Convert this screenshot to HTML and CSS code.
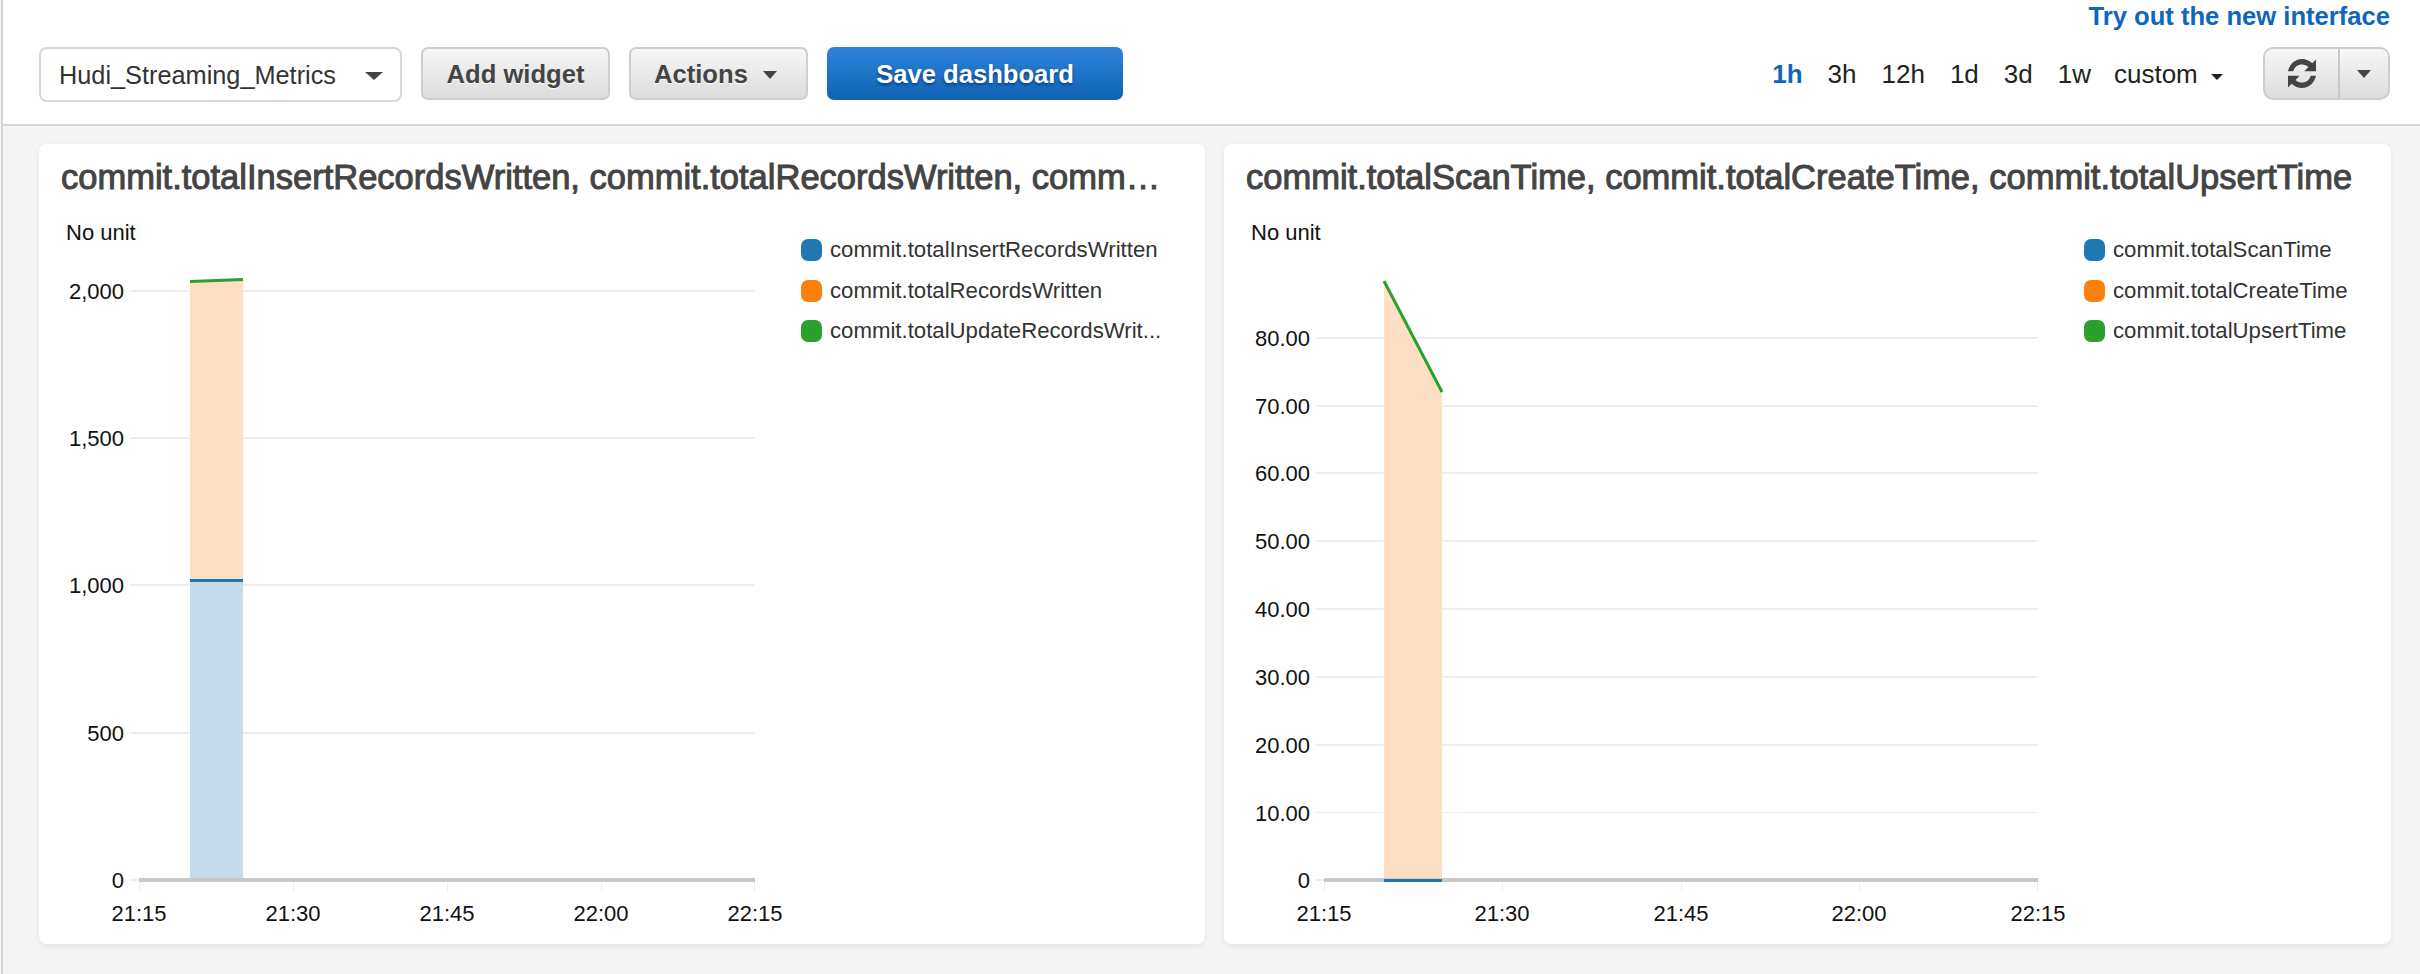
FILE: index.html
```html
<!DOCTYPE html>
<html lang="en">
<head>
	<meta charset="UTF-8">
	<title>Hudi_Streaming_Metrics - CloudWatch</title>
	<link rel="stylesheet" href="styles.css">
</head>
<body>
	<div class="page">
		<header class="topbar">
			<div class="tryRow"><a class="tryLink" href="#">Try out the new interface</a></div>
			<div class="toolRow">
				<div class="dashSelect">
					<span>Hudi_Streaming_Metrics</span>
					<i class="caret caretSelect"></i>
				</div>
				<button class="btn btnAdd">Add widget</button>
				<button class="btn btnActions">Actions <i class="caret caretBtn"></i></button>
				<button class="btn btnPrimary">Save dashboard</button>
				<div class="timeRange">
					<a class="range active">1h</a>
					<a class="range">3h</a>
					<a class="range">12h</a>
					<a class="range">1d</a>
					<a class="range">3d</a>
					<a class="range">1w</a>
					<a class="range custom">custom <i class="caret caretSmall"></i></a>
				</div>
				<div class="refreshGroup">
					<button class="refreshBtn" aria-label="Refresh">
						<svg width="36" height="35" viewBox="0 0 30 30">
							<path d="M3 13C4.500 6.500 9.300 2.500 15 2.500c3.500 0 6.500 1.400 8.800 3.700L27 3V13H17L20.500 9.500C19 8 17.100 7.200 15 7.200c-3.600 0-6.500 2.300-7.500 5.800Z" fill="#444"/>
							<path d="M27 17C25.500 23.500 20.700 27.500 15 27.500c-3.500 0-6.500-1.400-8.800-3.700L3 27V17H13L9.500 20.500C11 22 12.900 22.800 15 22.800c3.600 0 6.500-2.300 7.500-5.800Z" fill="#444"/>
						</svg>
					</button>
					<button class="refreshMenu" aria-label="Refresh options"><i class="caret caretBtn"></i></button>
				</div>
			</div>
		</header>

		<main class="widgets">
			<section class="widget widgetLeft">
				<h2 class="widgetTitle">commit.totalInsertRecordsWritten, commit.totalRecordsWritten, comm…</h2>
				<div class="chartArea">
					<svg class="chart" width="1166" height="800" viewBox="39 144 1166 800">
						<text class="tick" x="66" y="240">No unit</text>
						<g class="grid">
							<rect x="130" y="290" width="625" height="2"/>
							<rect x="130" y="437" width="625" height="2"/>
							<rect x="130" y="584" width="625" height="2"/>
							<rect x="130" y="732" width="625" height="2"/>
							<rect x="130" y="879" width="10" height="2"/>
						</g>
						<g class="tick" text-anchor="end">
							<text x="124" y="299">2,000</text>
							<text x="124" y="446">1,500</text>
							<text x="124" y="593">1,000</text>
							<text x="124" y="741">500</text>
							<text x="124" y="888">0</text>
						</g>
						<polygon points="190,282 243,280 243,580 190,580" fill="#ffdfc3"/>
						<rect x="190" y="580" width="53" height="298" fill="#c7dcea"/>
						<rect x="190" y="579" width="53" height="3" fill="#1f77b4"/>
						<line x1="190" y1="281.500" x2="243" y2="279.500" stroke="#2ca02c" stroke-width="3"/>
						<rect x="139" y="878" width="616" height="4" fill="#c8c8c8"/>
						<g class="grid">
							<rect x="139" y="882" width="1" height="9"/>
							<rect x="293" y="882" width="1" height="9"/>
							<rect x="447" y="882" width="1" height="9"/>
							<rect x="601" y="882" width="1" height="9"/>
							<rect x="754" y="882" width="1" height="9"/>
						</g>
						<g class="tick" text-anchor="middle">
							<text x="139" y="921">21:15</text>
							<text x="293" y="921">21:30</text>
							<text x="447" y="921">21:45</text>
							<text x="601" y="921">22:00</text>
							<text x="755" y="921">22:15</text>
						</g>
					</svg>
					<ul class="legend legendLeft">
						<li><i class="swatch blue"></i>commit.totalInsertRecordsWritten</li>
						<li><i class="swatch orange"></i>commit.totalRecordsWritten</li>
						<li><i class="swatch green"></i>commit.totalUpdateRecordsWrit...</li>
					</ul>
				</div>
			</section>

			<section class="widget widgetRight">
				<h2 class="widgetTitle">commit.totalScanTime, commit.totalCreateTime, commit.totalUpsertTime</h2>
				<div class="chartArea">
					<svg class="chart" width="1167" height="800" viewBox="1224 144 1167 800">
						<text class="tick" x="1251" y="240">No unit</text>
						<g class="grid">
							<rect x="1316" y="337" width="722" height="2"/>
							<rect x="1316" y="405" width="722" height="2"/>
							<rect x="1316" y="472" width="722" height="2"/>
							<rect x="1316" y="540" width="722" height="2"/>
							<rect x="1316" y="608" width="722" height="2"/>
							<rect x="1316" y="676" width="722" height="2"/>
							<rect x="1316" y="744" width="722" height="2"/>
							<rect x="1316" y="812" width="722" height="1"/>
							<rect x="1316" y="879" width="10" height="2"/>
						</g>
						<g class="tick" text-anchor="end">
							<text x="1310" y="346">80.00</text>
							<text x="1310" y="414">70.00</text>
							<text x="1310" y="481">60.00</text>
							<text x="1310" y="549">50.00</text>
							<text x="1310" y="617">40.00</text>
							<text x="1310" y="685">30.00</text>
							<text x="1310" y="753">20.00</text>
							<text x="1310" y="821">10.00</text>
							<text x="1310" y="888">0</text>
						</g>
						<polygon points="1384,281 1442,392 1442,878 1384,878" fill="#ffdfc3"/>
						<line x1="1384" y1="281" x2="1442" y2="392" stroke="#2ca02c" stroke-width="3"/>
						<rect x="1324" y="878" width="714" height="4" fill="#c8c8c8"/>
						<rect x="1384" y="879" width="58" height="3" fill="#1f77b4"/>
						<g class="grid">
							<rect x="1324" y="882" width="1" height="9"/>
							<rect x="1502" y="882" width="1" height="9"/>
							<rect x="1681" y="882" width="1" height="9"/>
							<rect x="1859" y="882" width="1" height="9"/>
							<rect x="2037" y="882" width="1" height="9"/>
						</g>
						<g class="tick" text-anchor="middle">
							<text x="1324" y="921">21:15</text>
							<text x="1502" y="921">21:30</text>
							<text x="1681" y="921">21:45</text>
							<text x="1859" y="921">22:00</text>
							<text x="2038" y="921">22:15</text>
						</g>
					</svg>
					<ul class="legend legendRight">
						<li><i class="swatch blue"></i>commit.totalScanTime</li>
						<li><i class="swatch orange"></i>commit.totalCreateTime</li>
						<li><i class="swatch green"></i>commit.totalUpsertTime</li>
					</ul>
				</div>
			</section>
		</main>
	</div>
</body>
</html>
```

FILE: styles.css
```css
html, body {
	margin: 0;
	height: 100%;
	overflow: hidden;
}
body {
	background-color: #f5f5f5;
	font-family: "Liberation Sans", Arial, sans-serif;
	color: #000;
}
.page {
	height: 974px;
	border-left: 2px solid #d5d5d5;
	margin-left: 1px;
	box-sizing: border-box;
}
.topbar {
	background-color: #fff;
	height: 126px;
	box-sizing: border-box;
	border-bottom: 2px solid #d5d5d5;
	padding-right: 30px;
}
.tryRow {
	height: 47px;
	text-align: right;
	line-height: 32px;
}
.tryLink {
	color: #1166bb;
	font-size: 25.600px;
	font-weight: bold;
	text-decoration: none;
}
.toolRow {
	display: flex;
	align-items: flex-start;
	padding-left: 36px;
}
.dashSelect {
	width: 363px;
	height: 55px;
	box-sizing: border-box;
	border: 2px solid #d8d8d8;
	border-radius: 8px;
	display: flex;
	align-items: center;
	justify-content: space-between;
	padding: 2px 17px 0 18px;
	font-size: 25.300px;
	color: #333;
}
.btn {
	height: 53px;
	margin-left: 19px;
	box-sizing: border-box;
	border: 2px solid #cecece;
	border-radius: 7px;
	background: linear-gradient(#f7f7f7, #dcdcdc);
	font-family: inherit;
	font-size: 25.600px;
	font-weight: bold;
	color: #444;
	text-shadow: 0 1px 1px #fff;
	padding: 1px 0 0;
}
.btnAdd {
	width: 189px;
}
.btnActions {
	width: 179px;
	padding-right: 6px;
}
.btnPrimary {
	width: 296px;
	border: 0;
	background: linear-gradient(#2f83d9, #0f63b5);
	color: #fff;
	text-shadow: 0 2px 3px #0a3f78;
}
.caret {
	display: inline-block;
	width: 0;
	height: 0;
	border-style: solid;
	border-color: #444 transparent transparent;
}
.caretSelect {
	border-width: 8px 9px 0;
}
.caretBtn {
	border-width: 8px 7.500px 0;
	vertical-align: 4px;
	margin-left: 8px;
}
.caretSmall {
	border-width: 6px 6px 0;
	border-top-color: #222;
	vertical-align: 3px;
	margin-left: 6px;
}
.timeRange {
	margin-left: auto;
	display: flex;
	gap: 25px;
	height: 53px;
	line-height: 54px;
	font-size: 26px;
}
.range {
	color: #222;
}
.range.active {
	color: #1166bb;
	font-weight: bold;
}
.custom {
	margin-left: -2px;
}
.refreshGroup {
	display: flex;
	margin-left: 40px;
	height: 53px;
	box-sizing: border-box;
	border: 2px solid #cecece;
	border-radius: 10px;
	background: linear-gradient(#f7f7f7, #dcdcdc);
}
.refreshGroup button {
	border: 0;
	background: none;
	padding: 0;
	display: flex;
	align-items: center;
	justify-content: center;
}
.refreshBtn {
	width: 75px;
	border-right: 2px solid #c8c8c8 !important;
}
.refreshMenu {
	width: 48px;
}
.refreshMenu .caret {
	margin: 0;
	vertical-align: 0;
}
.widgets {
	display: flex;
	gap: 19px;
	padding: 18px 0 0 36px;
}
.widget {
	background-color: #fff;
	height: 800px;
	box-sizing: border-box;
	border-radius: 8px;
	box-shadow: 0 2px 6px rgba(0, 0, 0, 0.08);
	position: relative;
}
.widgetLeft {
	width: 1166px;
}
.widgetRight {
	width: 1167px;
}
.widgetTitle {
	position: absolute;
	left: 22px;
	top: 14px;
	margin: 0;
	font-size: 34.500px;
	font-weight: normal;
	line-height: 38px;
	color: #444;
	-webkit-text-stroke: 1px #444;
	white-space: nowrap;
}
.chart {
	display: block;
}
.tick {
	font-size: 22px;
	fill: #111;
}
.grid {
	fill: #eee;
}
.legend {
	position: absolute;
	top: 86px;
	margin: 0;
	padding: 0;
	list-style: none;
	font-size: 22.200px;
	color: #333;
}
.legendLeft {
	left: 762px;
}
.legendRight {
	left: 860px;
}
.legend li {
	display: flex;
	align-items: center;
	height: 40.500px;
	white-space: nowrap;
}
.swatch {
	width: 21px;
	height: 22px;
	border-radius: 7px;
	margin-right: 8px;
}
.blue {
	background-color: #1f77b4;
}
.orange {
	background-color: #ff7f0e;
}
.green {
	background-color: #2ca02c;
}
```
